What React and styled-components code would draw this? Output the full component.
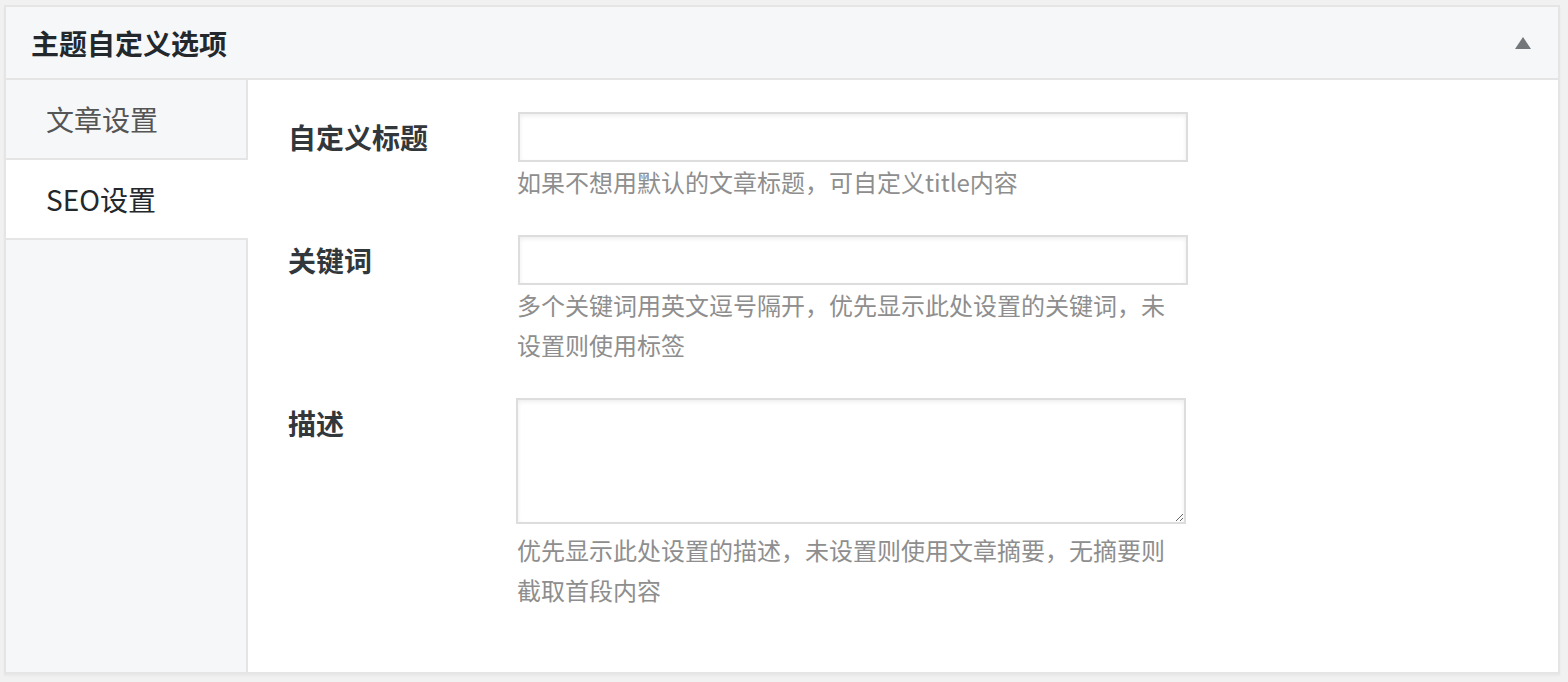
import React from "react";
import styled, { createGlobalStyle } from "styled-components";

const GlobalStyle = createGlobalStyle`
    body {
        margin: 0;
        background: #f1f1f1;
        font-family: "Noto Sans CJK SC", "Noto Sans", "Liberation Sans", sans-serif;
    }
`;

const Page = styled.div`
    padding: 5px 8px 8px 4px;
`;

const Postbox = styled.div`
    background: #fff;
    border: 2px solid #e5e5e5;
    box-shadow: 0 2px 2px rgba(0, 0, 0, 0.04);
`;

const Header = styled.div`
    display: flex;
    align-items: center;
    height: 71px;
    padding: 0 27px 0 25px;
    background: #f6f7f8;
    border-bottom: 2px solid #e5e5e5;

    & h2 {
        margin: 0;
        font-size: 28px;
        font-weight: 700;
        color: #23282d;
        line-height: 1;
    }
`;

const Toggle = styled.button`
    margin-left: auto;
    padding: 0;
    border: 0;
    background: none;
    display: flex;
    cursor: pointer;
`;

const Body = styled.div`
    display: flex;
    height: 592px;
`;

const Sidebar = styled.ul`
    list-style: none;
    margin: 0;
    padding: 0;
    width: 240px;
    background: #f6f7f8;
    border-right: 2px solid #e5e5e5;
`;

const Tab = styled.li`
    height: 78px;
    display: flex;
    align-items: center;
    padding-left: 40px;
    font-size: 28px;
    color: ${(p) => (p.$active ? "#23282d" : "#555")};
    background: ${(p) => (p.$active ? "#fff" : "transparent")};
    border-bottom: 2px solid #e5e5e5;
    margin-right: ${(p) => (p.$active ? "-2px" : "0")};
    cursor: pointer;
`;

const Content = styled.div`
    flex: 1;
    padding: 32px 0 0 40px;
`;

const Field = styled.div`
    display: grid;
    grid-template-columns: 230px 670px;
    margin-bottom: 33px;
`;

const Label = styled.label`
    font-size: 28px;
    font-weight: 700;
    color: #32373c;
    line-height: 50px;
`;

const Input = styled.input`
    box-sizing: border-box;
    width: 100%;
    height: 50px;
    margin: 0;
    border: 2px solid #ddd;
    box-shadow: inset 0 2px 4px rgba(0, 0, 0, 0.07);
    background: #fff;
    font-size: 24px;
    outline: none;
`;

const TextArea = styled.textarea`
    display: block;
    box-sizing: border-box;
    width: 670px;
    height: 126px;
    margin: 0 0 0 -2px;
    border: 2px solid #ddd;
    box-shadow: inset 0 2px 4px rgba(0, 0, 0, 0.07);
    background: #fff;
    font-size: 24px;
    outline: none;
`;

const Help = styled.p`
    margin: ${(p) => (p.$gap ? "6px" : "0")} 0 0 -1px;
    font-size: 24px;
    line-height: 40px;
    color: #8e8e8e;
`;

const fields = [
    { label: "自定义标题", help: "如果不想用默认的文章标题，可自定义title内容" },
    { label: "关键词", help: "多个关键词用英文逗号隔开，优先显示此处设置的关键词，未设置则使用标签" },
    { label: "描述", help: "优先显示此处设置的描述，未设置则使用文章摘要，无摘要则截取首段内容", multiline: true },
];

export default function App() {
    return (
        <Page>
            <GlobalStyle />
            <Postbox>
                <Header>
                    <h2>主题自定义选项</h2>
                    <Toggle aria-label="折叠">
                        <svg width="16" height="12" viewBox="0 0 16 12">
                            <polygon points="8,0 16,12 0,12" fill="#72777c" />
                        </svg>
                    </Toggle>
                </Header>
                <Body>
                    <Sidebar>
                        <Tab>文章设置</Tab>
                        <Tab $active>SEO设置</Tab>
                    </Sidebar>
                    <Content>
                        {fields.map((f) => (
                            <Field key={f.label}>
                                <Label>{f.label}</Label>
                                <div>
                                    {f.multiline ? <TextArea /> : <Input type="text" />}
                                    <Help $gap={f.multiline}>{f.help}</Help>
                                </div>
                            </Field>
                        ))}
                    </Content>
                </Body>
            </Postbox>
        </Page>
    );
}
